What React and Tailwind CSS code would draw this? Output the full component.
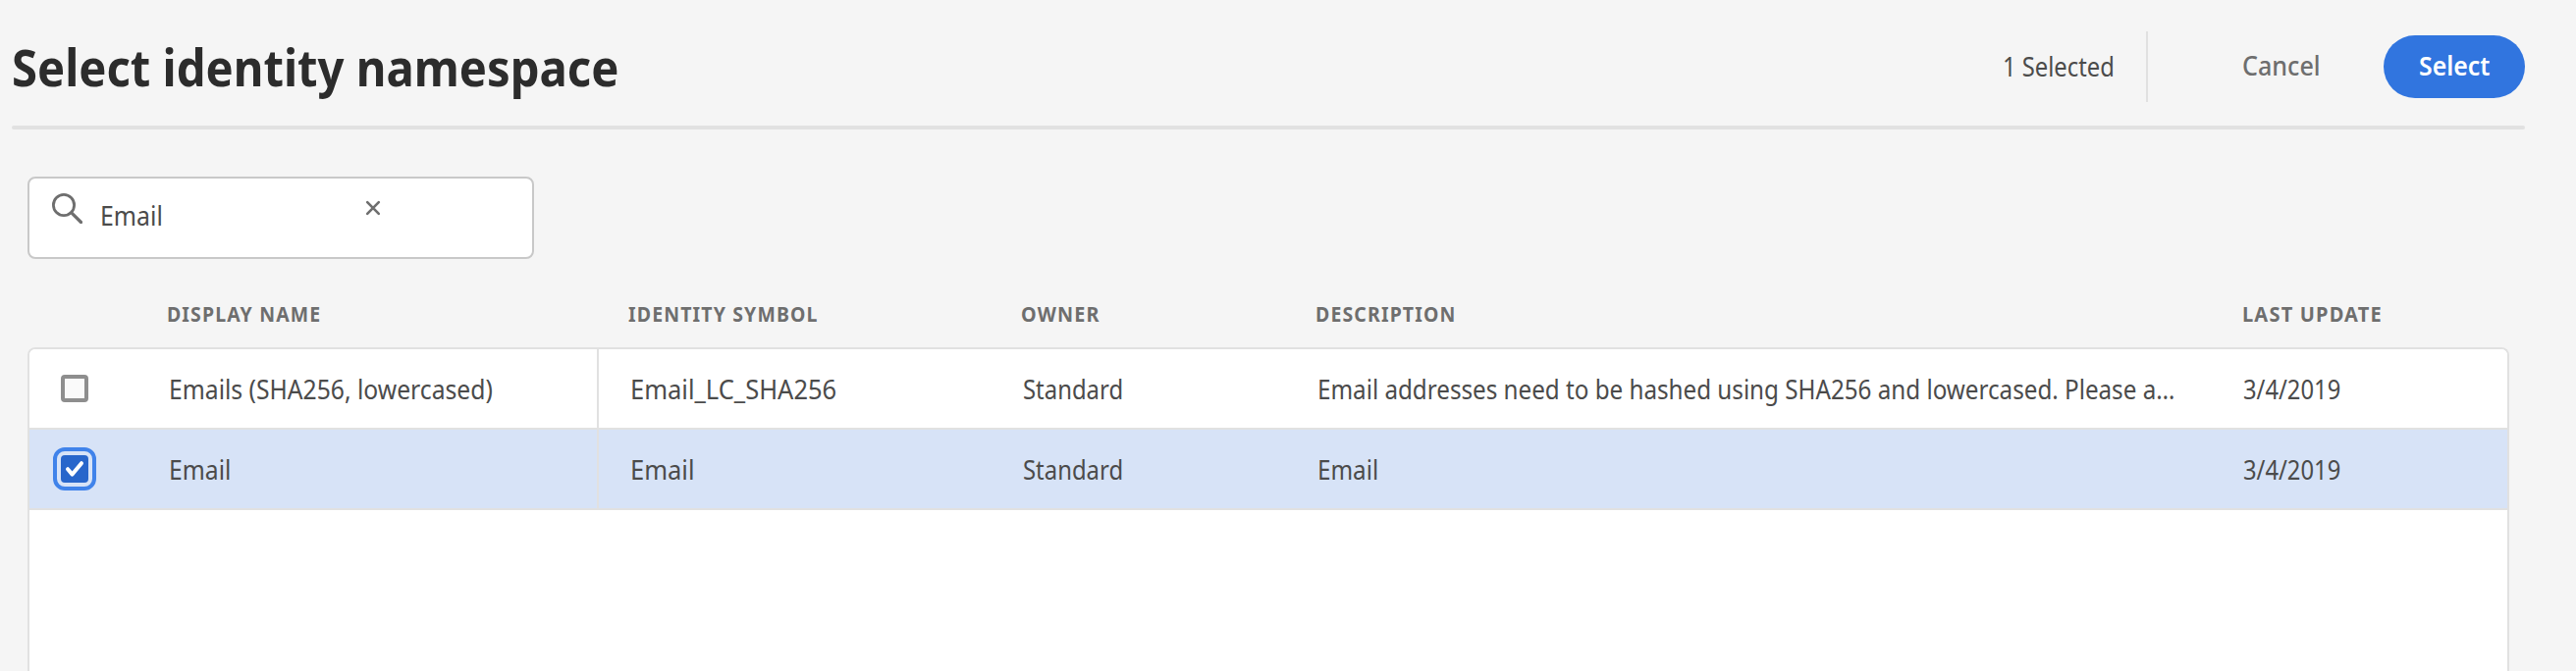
const GRID = "grid grid-cols-[139px_441px_428px_300px_944px_1fr]";

const COLUMNS = [
  { label: "DISPLAY NAME", className: "pl-px scale-x-[0.885]" },
  { label: "IDENTITY SYMBOL", className: "ml-[30px] scale-x-[0.885]" },
  { label: "OWNER", className: "ml-0.5 scale-x-[0.9]" },
  { label: "DESCRIPTION", className: "ml-0.5 scale-x-[0.885]" },
  { label: "LAST UPDATE", className: "ml-0.5 scale-x-[0.91]" },
];

const ROWS = [
  {
    name: "Emails (SHA256, lowercased)",
    symbol: "Email_LC_SHA256",
    owner: "Standard",
    description: "Email addresses need to be hashed using SHA256 and lowercased. Please a…",
    updated: "3/4/2019",
    selected: false,
  },
  {
    name: "Email",
    symbol: "Email",
    owner: "Standard",
    description: "Email",
    updated: "3/4/2019",
    selected: true,
  },
];

function Text({ className = "", children }) {
  return <span className={`inline-block origin-left whitespace-nowrap ${className}`}>{children}</span>;
}

function Checkbox({ checked }) {
  if (!checked) {
    return <span className="ml-8 size-7 rounded-[4px] border-4 border-[#8e8e8e] bg-[#fafafa]" />;
  }
  return (
    <span className="ml-6 flex size-11 items-center justify-center rounded-xl border-4 border-[#4083ea]">
      <span className="flex size-7 items-center justify-center rounded-[4px] bg-[#2866cb]">
        <svg viewBox="0 0 28 28" className="size-7" fill="none" stroke="#fff" strokeWidth="4" strokeLinecap="round" strokeLinejoin="round">
          <path d="M7 14.2 L11.6 19.6 L21 8.2" />
        </svg>
      </span>
    </span>
  );
}

function Row({ row }) {
  return (
    <div className={`${GRID} h-[82px] border-b-2 border-[#e1e1e1] ${row.selected ? "bg-[#d7e3f7]" : "bg-white"}`}>
      <div className="flex items-center">
        <Checkbox checked={row.selected} />
      </div>
      <div className="flex items-center border-r-2 border-[#e1e1e1] pt-px pl-[3px]">
        <Text className="scale-x-[0.914]">{row.name}</Text>
      </div>
      <div className="flex items-center pt-px pl-8">
        <Text className="scale-x-[0.945]">{row.symbol}</Text>
      </div>
      <div className="flex items-center pt-px pl-1">
        <Text className="scale-x-[0.885]">{row.owner}</Text>
      </div>
      <div className="flex items-center pt-px pl-1">
        <Text className="scale-x-[0.896]">{row.description}</Text>
      </div>
      <div className="flex items-center pt-px pl-[3px]">
        <Text className="scale-x-[0.88]">{row.updated}</Text>
      </div>
    </div>
  );
}

export default function App() {
  return (
    <div className="flex h-[684px] w-[2624px] flex-col overflow-hidden bg-[#f5f5f5] font-['Noto_Sans',sans-serif] text-[27px] leading-9 text-[#4b4b4b]">
      <header className="mr-[52px] ml-3 flex h-32 items-start justify-between">
        <h1 className="mt-[38px] text-[52px] leading-[60px] font-bold text-[#2c2c2c]">
          <Text className="scale-x-[0.908]">Select identity namespace</Text>
        </h1>
        <div className="flex items-start">
          <div className="mt-[50px] w-[146px]">
            <Text className="scale-x-[0.88]">1 Selected</Text>
          </div>
          <div className="mt-8 h-[72px] w-0.5 bg-[#e1e1e1]" />
          <button className="mt-[49px] ml-24 w-36 text-left font-medium text-[#6e6e6e]">
            <Text className="scale-x-[0.93]">Cancel</Text>
          </button>
          <button className="mt-9 flex h-16 w-36 items-start rounded-full bg-[#3175df] pt-[13px] pl-9 font-semibold text-white">
            <Text className="scale-x-[0.92]">Select</Text>
          </button>
        </div>
      </header>
      <div className="mr-[52px] ml-3 h-1 shrink-0 rounded-sm bg-[#e1e1e1]" />

      <div className="mt-12 ml-7 flex h-[84px] w-[516px] shrink-0 items-start rounded-lg border-2 border-[#c8c8c8] bg-white">
        <svg viewBox="0 0 32 32" className="mt-[14px] ml-[22px] size-8" fill="none" stroke="#6e6e6e" strokeLinecap="round">
          <circle cx="13" cy="13" r="10.6" strokeWidth="2.8" />
          <path d="M20.8 20.8 L30.5 30.5" strokeWidth="3.2" />
        </svg>
        <div className="mt-5 ml-[18px] w-[270px]">
          <Text className="scale-x-[0.92]">Email</Text>
        </div>
        <svg viewBox="0 0 16 16" className="mt-[22px] size-4" fill="none" stroke="#6e6e6e" strokeWidth="2.6" strokeLinecap="round">
          <path d="M2.2 2.2 L13.8 13.8 M13.8 2.2 L2.2 13.8" />
        </svg>
      </div>

      <div className={`${GRID} mr-[70px] ml-[30px] h-[90px] shrink-0 pt-[37px] text-[22px] font-bold leading-9 tracking-[1.3px] text-[#6e6e6e]`}>
        <span />
        {COLUMNS.map((column) => (
          <div key={column.label}>
            <Text className={column.className}>{column.label}</Text>
          </div>
        ))}
      </div>

      <div className="mr-[68px] ml-7 flex-1 overflow-hidden rounded-t-lg border-x-2 border-t-2 border-[#e1e1e1] bg-white">
        {ROWS.map((row) => (
          <Row key={row.symbol} row={row} />
        ))}
      </div>
    </div>
  );
}
